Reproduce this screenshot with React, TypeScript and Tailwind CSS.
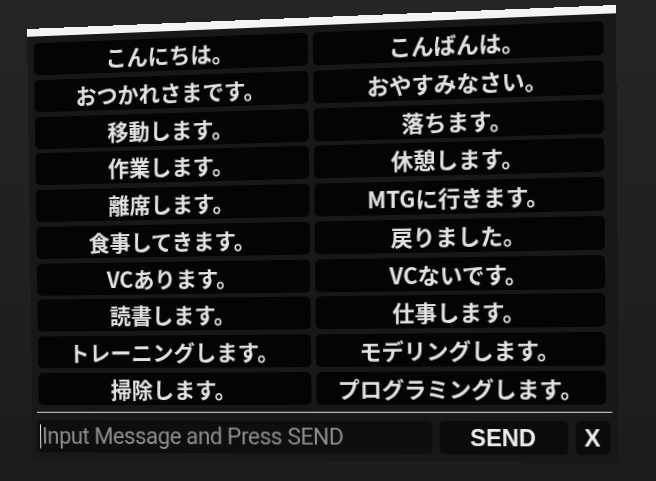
const phrases: [string, string][] = [
  ["こんにちは。", "こんばんは。"],
  ["おつかれさまです。", "おやすみなさい。"],
  ["移動します。", "落ちます。"],
  ["作業します。", "休憩します。"],
  ["離席します。", "MTGに行きます。"],
  ["食事してきます。", "戻りました。"],
  ["VCあります。", "VCないです。"],
  ["読書します。", "仕事します。"],
  ["トレーニングします。", "モデリングします。"],
  ["掃除します。", "プログラミングします。"],
];

const PhraseButton = ({ label }: { label: string }) => (
  <button className="h-[33px] rounded-[5px] bg-[#040405] flex items-center justify-center pb-[1px] text-[22px] font-bold leading-none text-[#e2e2e2] font-['Noto_Sans_CJK_JP',sans-serif]">
    {label}
  </button>
);

export default function App() {
  return (
    <div className="w-[656px] h-[481px] overflow-hidden bg-gradient-to-b from-[#252527] to-[#1c1c1e]">
      {/* panel is a flat 590x445 window projected onto the tilted quad */}
      <div className="w-[590px] h-[445px] origin-top-left [transform:matrix3d(0.936717,-0.041178,0,-0.00009998,0.013885,0.974144,0,0.000012183,0,0,1,0,27,29,0,1)] bg-[#18181a] flex flex-col">
        <div className="h-[7.5px] bg-[#f4f4f4]" />

        <div className="mt-[7.5px] pl-[7px] pr-[12px] grid grid-cols-2 gap-x-[5px] gap-y-[4.75px]">
          {phrases.flat().map((label) => (
            <PhraseButton key={label} label={label} />
          ))}
        </div>

        <div className="mt-[7px] ml-[5px] mr-[6px] h-[1.5px] bg-[#dcdcdc]" />

        <div className="mt-[8px] h-[33px] pl-[4.5px] pr-[8.5px] flex gap-[7px]">
          <div className="w-[405px] rounded-[5px] bg-[#0e0e10] flex items-center pl-[3px]">
            <span className="w-[1.5px] h-[25px] bg-[#e8e8e8]" />
            <span className="ml-[1px] text-[23px] tracking-[-0.4px] text-[#8e8e8e] font-['Roboto',sans-serif]">
              Input Message and Press SEND
            </span>
          </div>
          <button className="w-[125px] rounded-[5px] bg-[#0b0b0d] flex items-center justify-center text-[23px] font-bold text-[#ececec] font-['Liberation_Sans',Arial,sans-serif]">
            SEND
          </button>
          <button className="w-[33px] rounded-[5px] bg-[#0b0b0d] flex items-center justify-center text-[23px] font-bold text-[#ececec] font-['Liberation_Sans',Arial,sans-serif]">
            X
          </button>
        </div>
      </div>
    </div>
  );
}
